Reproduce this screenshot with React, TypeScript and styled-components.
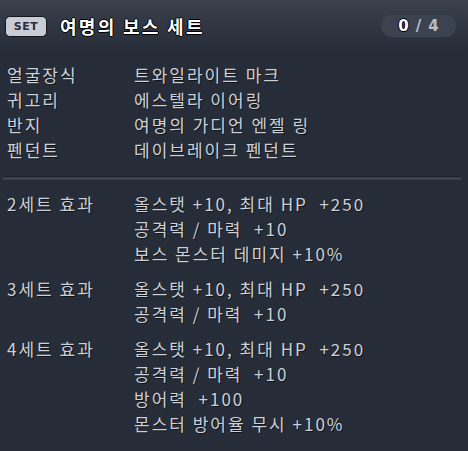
import React from 'react';
import styled, { createGlobalStyle } from 'styled-components';

type Effect = { label: string; lines: string[] };

const PARTS: [string, string][] = [
  ['얼굴장식', '트와일라이트 마크'],
  ['귀고리', '에스텔라 이어링'],
  ['반지', '여명의 가디언 엔젤 링'],
  ['펜던트', '데이브레이크 펜던트'],
];

const EFFECTS: Effect[] = [
  {
    label: '2세트 효과',
    lines: ['올스탯 +10, 최대 HP  +250', '공격력 / 마력  +10', '보스 몬스터 데미지 +10%'],
  },
  {
    label: '3세트 효과',
    lines: ['올스탯 +10, 최대 HP  +250', '공격력 / 마력  +10'],
  },
  {
    label: '4세트 효과',
    lines: [
      '올스탯 +10, 최대 HP  +250',
      '공격력 / 마력  +10',
      '방어력  +100',
      '몬스터 방어율 무시 +10%',
    ],
  },
];

const GlobalStyle = createGlobalStyle`
  html, body {
    margin: 0;
    padding: 0;
    background: #262d38;
  }
  body {
    font-family: "Noto Sans CJK KR", "Noto Sans", sans-serif;
  }
`;

const Panel = styled.div`
  width: 468px;
  height: 451px;
  background: #262d38;
  overflow: hidden;
`;

const Header = styled.div`
  height: 52px;
  display: flex;
  align-items: center;
  padding: 0 12px 0 5px;
  background: linear-gradient(to bottom, #3a414c 0%, #2c333e 70%, #262d38 100%);
`;

const SetBadge = styled.div`
  width: 42px;
  height: 21px;
  box-sizing: border-box;
  display: flex;
  align-items: center;
  justify-content: center;
  background: #c9ccd6;
  border: 1px solid #14171c;
  border-radius: 5px;
  font-family: "DejaVu Sans", sans-serif;
  font-weight: 900;
  font-size: 11px;
  letter-spacing: 0.5px;
  color: #2a2e36;
`;

const Title = styled.div`
  margin-left: 13px;
  font-size: 18px;
  font-weight: 700;
  letter-spacing: 2.3px;
  color: #ffffff;
  text-shadow: 1px 0 0 #000, -1px 0 0 #000, 0 1px 0 #000, 0 -1px 0 #000;
  flex: 1;
`;

const Counter = styled.div`
  width: 75px;
  height: 22px;
  border-radius: 11px;
  background: #3c4350;
  display: flex;
  align-items: center;
  justify-content: center;
  gap: 7px;
  font-family: "DejaVu Sans", sans-serif;
  font-weight: 700;
  font-size: 15px;
  color: #b9bdc6;
`;

const CountNow = styled.span`
  color: #ffffff;
  text-shadow: 1px 0 0 #000, -1px 0 0 #000, 0 1px 0 #000, 0 -1px 0 #000;
`;

const Rows = styled.div`
  display: grid;
  grid-template-columns: 127px 1fr;
  padding: 10px 0 0 7px;
  font-size: 17px;
  line-height: 25px;
  letter-spacing: 2px;
  color: #cdd0d6;
  text-shadow: 1px 1px 0 rgba(0, 0, 0, 0.55);
  white-space: pre;
`;

const Divider = styled.div`
  height: 3px;
  margin: 14px 7px 0 3px;
  background: #3b424d;
  border-top: 1px solid #1c2129;
`;

const Effects = styled.div`
  display: flex;
  flex-direction: column;
  gap: 10px;
  padding-top: 11px;
`;

const Cell = styled.div``;

const EffectLines = styled.div`
  display: flex;
  flex-direction: column;
`;

export default function App() {
  return (
    <Panel>
      <GlobalStyle />
      <Header>
        <SetBadge>SET</SetBadge>
        <Title>여명의 보스 세트</Title>
        <Counter>
          <CountNow>0</CountNow>
          <span>/</span>
          <span>4</span>
        </Counter>
      </Header>

      <Rows>
        {PARTS.map(([slot, name]) => (
          <React.Fragment key={slot}>
            <Cell>{slot}</Cell>
            <Cell>{name}</Cell>
          </React.Fragment>
        ))}
      </Rows>

      <Divider />

      <Effects>
        {EFFECTS.map((effect) => (
          <Rows key={effect.label} style={{ paddingTop: 0 }}>
            <Cell>{effect.label}</Cell>
            <EffectLines>
              {effect.lines.map((line) => (
                <Cell key={line}>{line}</Cell>
              ))}
            </EffectLines>
          </Rows>
        ))}
      </Effects>
    </Panel>
  );
}
